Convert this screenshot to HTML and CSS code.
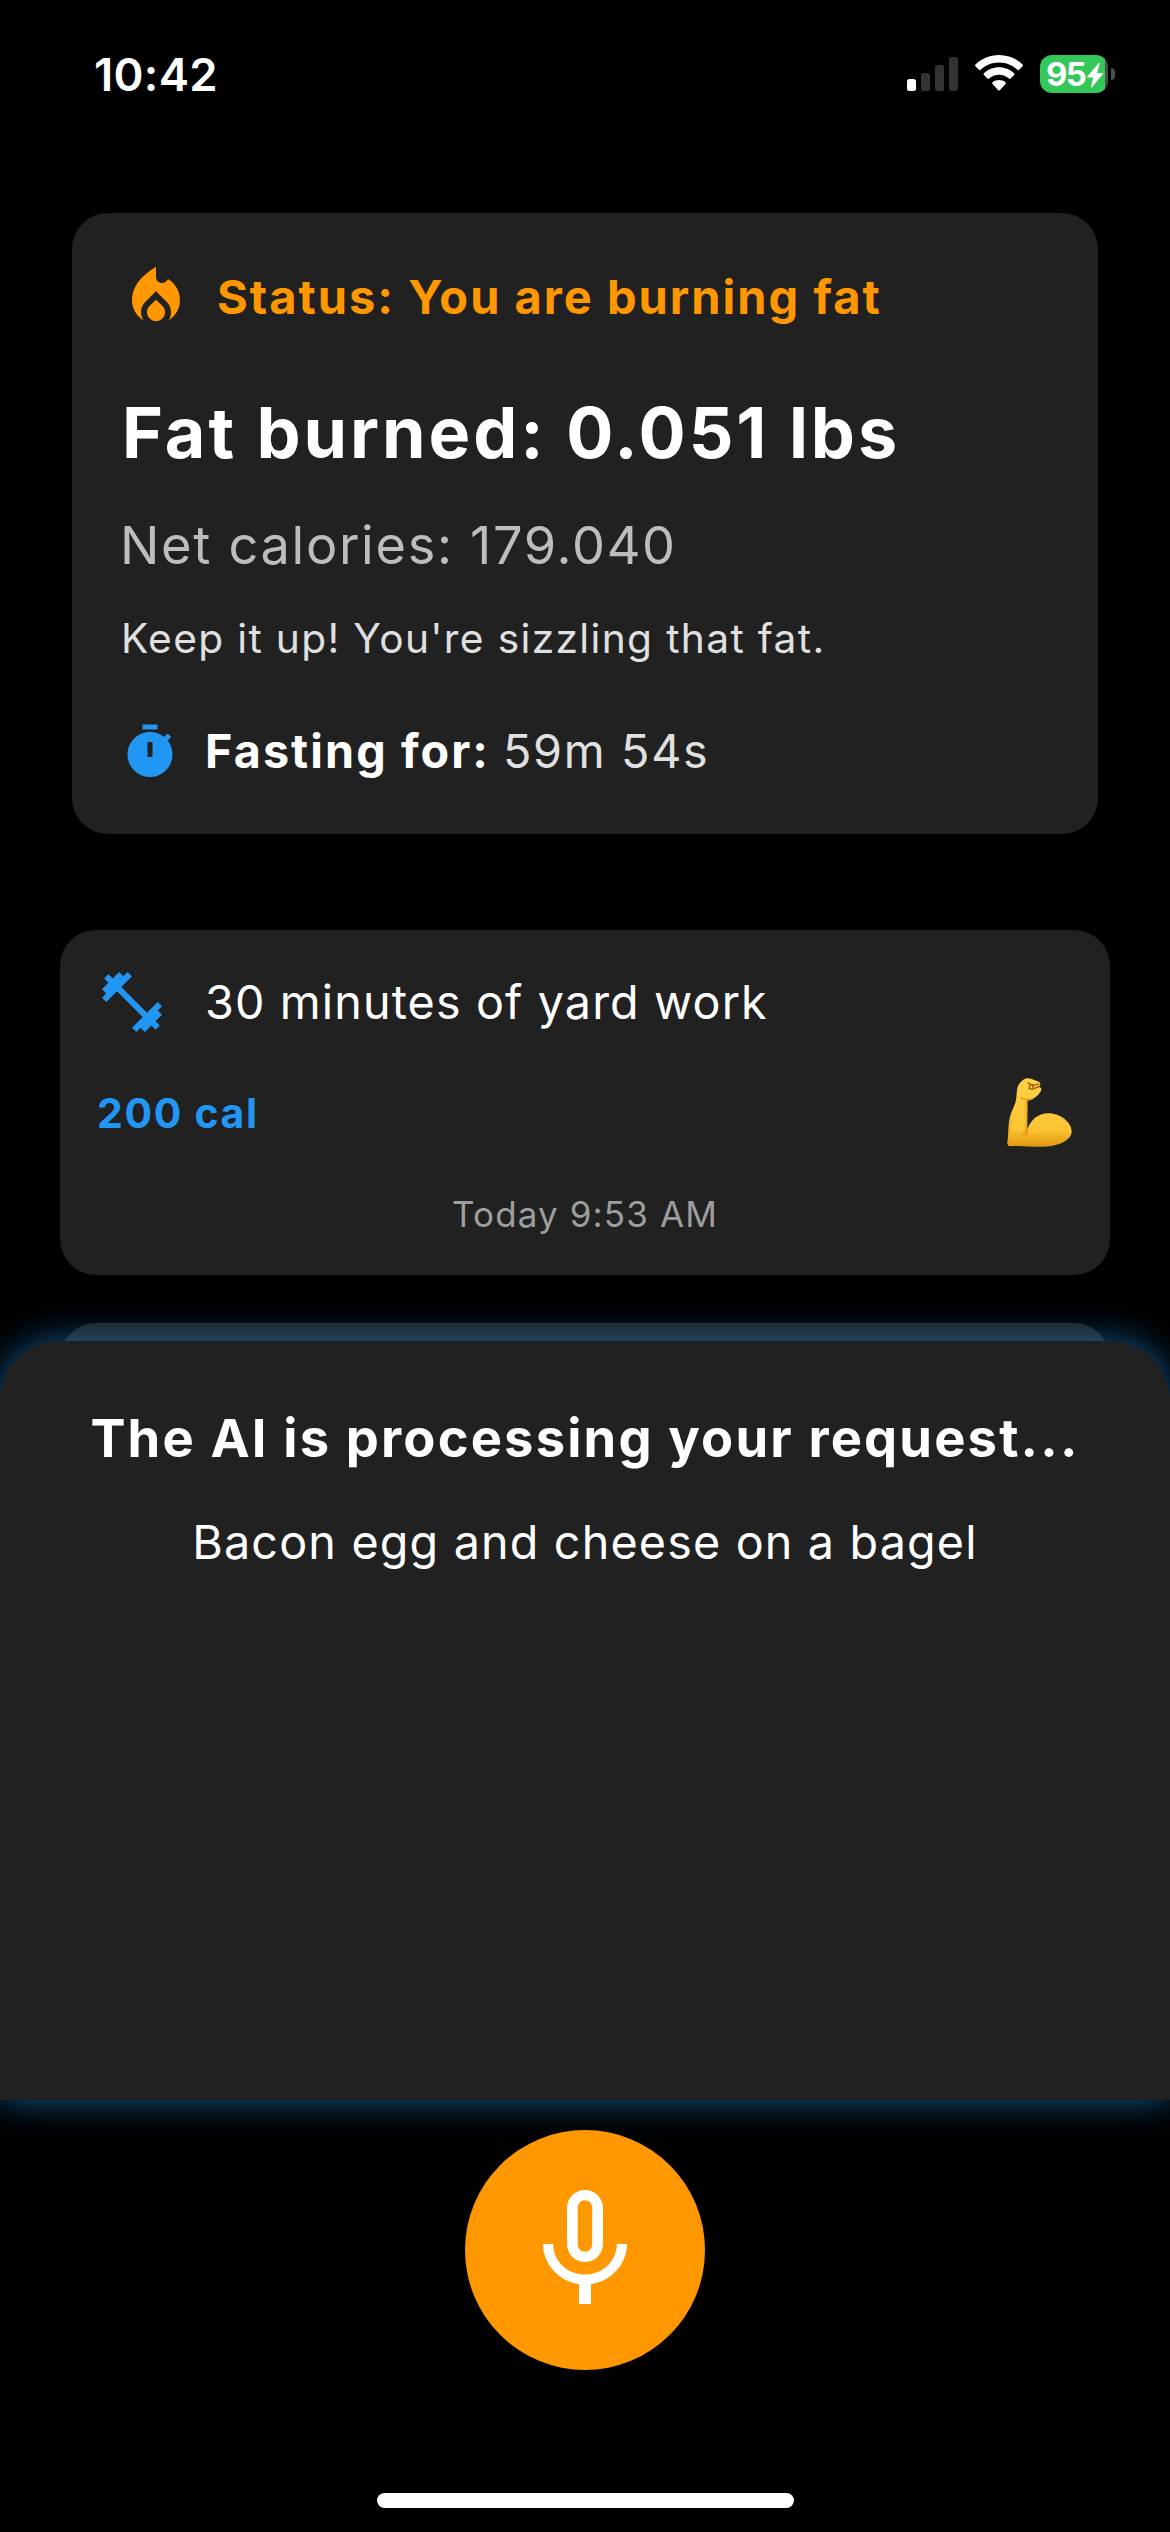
FILE: index.html
```html
<!DOCTYPE html>
<html lang="en">
<head>
<meta charset="utf-8">
<title>Fat Burn Tracker</title>
<link rel="stylesheet" href="styles.css">
</head>
<body>
<div class="app">
  <header class="status-bar">
    <span class="clock">10:42</span>
    <div class="indicators">
      <svg class="signal" viewBox="0 0 51 34" aria-label="Signal">
        <rect x="0" y="22" width="9" height="12" rx="2.5" fill="#fff"/>
        <rect x="14" y="16" width="9" height="18" rx="2.5" fill="#333"/>
        <rect x="28" y="8" width="9" height="26" rx="2.5" fill="#333"/>
        <rect x="42" y="0" width="9" height="34" rx="2.5" fill="#333"/>
      </svg>
      <svg class="wifi" viewBox="0 0 48 36" aria-label="Wi-Fi">
        <path fill="#fff" d="M24 0C14.8 0 6.500 3.600.4 9.500c-.5.500-.5 1.200 0 1.700l3.500 3.600c.4.500 1.100.5 1.600 0C10.400 10.100 16.900 7.400 24 7.400s13.600 2.700 18.500 7.400c.5.500 1.200.5 1.600 0l3.500-3.600c.5-.5.5-1.200 0-1.700C41.500 3.600 33.200 0 24 0z"/>
        <path fill="#fff" d="M24 12.300c-5.900 0-11.200 2.300-15.100 6-.5.500-.5 1.200 0 1.700l3.600 3.600c.4.400 1.100.4 1.600 0 2.600-2.400 6-3.900 9.900-3.900s7.300 1.500 9.900 3.900c.5.400 1.200.4 1.600 0l3.600-3.600c.5-.5.5-1.200 0-1.700-3.900-3.700-9.200-6-15.100-6z"/>
        <path fill="#fff" d="M24 25c-2.500 0-4.700.8-6.400 2.300-.5.400-.5 1.200 0 1.700l5.600 6.200c.5.500 1.100.5 1.600 0l5.600-6.200c.5-.5.5-1.300 0-1.700C28.700 25.800 26.500 25 24 25z"/>
      </svg>
      <div class="battery">
        <div class="battery-body">
          <span class="battery-level">95</span>
          <svg class="bolt" viewBox="0 0 16 25"><path fill="#fff" d="M11.600.2 0.500 13.200c-.6.7-.2 1.300.6 1.300h5.100L4 23.600c-.2.900.5 1.200 1.100.5L15.700 11.300c.6-.7.2-1.300-.6-1.300H10L12.600.9c.3-.8-.4-1.300-1-.7z"/></svg>
        </div>
        <span class="battery-cap"></span>
      </div>
    </div>
  </header>

  <main class="feed">
    <section class="card summary">
      <div class="status-row">
        <svg class="flame" viewBox="0 0 24 24"><path d="M12 12.900l-2.130 2.090c-.56.560-.87 1.290-.87 2.070C9 18.680 10.350 20 12 20s3-1.320 3-2.940c0-.78-.31-1.520-.87-2.070z"/><path d="M16 6l-.44.550C14.380 8.020 12 7.190 12 5.300V2S4 6 4 13c0 2.920 1.560 5.470 3.890 6.860-.56-.79-.89-1.760-.89-2.800 0-1.320.52-2.560 1.470-3.500L12 10.100l3.530 3.470c.95.930 1.470 2.170 1.470 3.500 0 1.020-.31 1.960-.85 2.750 1.890-1.150 3.290-3.060 3.710-5.300.66-3.550-1.070-6.900-3.860-8.520z"/></svg>
        <span class="status-text">Status: You are burning fat</span>
      </div>
      <h1 class="burned">Fat burned: 0.051 lbs</h1>
      <p class="net">Net calories: 179.040</p>
      <p class="cheer">Keep it up! You're sizzling that fat.</p>
      <div class="fasting-row">
        <svg class="timer" viewBox="0 0 24 24"><path fill-rule="evenodd" d="M9 1h6v2H9zM19.030 7.390l1.420-1.420c-.43-.51-.9-.99-1.410-1.410l-1.420 1.420C16.070 4.740 14.120 4 12 4c-4.970 0-9 4.030-9 9s4.020 9 9 9 9-4.030 9-9c0-2.120-.74-4.070-1.970-5.610zM13 14h-2V8h2z"/></svg>
        <span class="fasting-label">Fasting for:</span>
        <span class="fasting-time">59m 54s</span>
      </div>
    </section>

    <section class="card entry">
      <div class="entry-head">
        <svg class="dumbbell" viewBox="0 0 24 24"><path d="M20.570 14.860L22 13.430 20.570 12 17 15.570 8.430 7 12 3.430 10.570 2 9.140 3.430 7.710 2 5.570 4.140 4.140 2.710 2.710 4.140l1.430 1.430L2 7.710l1.430 1.430L2 10.570 3.430 12 7 8.430 15.570 17 12 20.570 13.430 22l1.430-1.430L16.290 22l2.140-2.140 1.430 1.430 1.430-1.430-1.430-1.430L22 16.290z"/></svg>
        <span class="entry-title">30 minutes of yard work</span>
      </div>
      <div class="entry-body">
        <span class="entry-cal">200 cal</span>
        <svg class="entry-arm" viewBox="0 0 201 213" role="img" aria-label="Flexed biceps">
          <defs>
            <linearGradient id="arm-fill" x1="0" y1="0" x2="0" y2="1">
              <stop offset="0" stop-color="#fdd247"/>
              <stop offset=".75" stop-color="#fcc433"/>
              <stop offset="1" stop-color="#e0950f"/>
            </linearGradient>
            <linearGradient id="forearm-shade" x1="0" y1="0" x2="1" y2="0">
              <stop offset="0" stop-color="#e59a17" stop-opacity=".8"/>
              <stop offset=".3" stop-color="#fcc838" stop-opacity="0"/>
              <stop offset=".75" stop-color="#fcc838" stop-opacity="0"/>
              <stop offset="1" stop-color="#d98b10" stop-opacity=".8"/>
            </linearGradient>
          </defs>
          <path fill="url(#arm-fill)" d="M57 3c4-2 10-1 16 1l22 8c6 2 8 6 6 11l-4 6c6 1 9 5 7 10-3 9-14 20-25 26-5 3-13 5-17 5 1 20-1 60 0 88 10-28 32-49 64-49 38 0 71 29 71 55 0 26-40 47-96 47-30 0-60-4-91-2-7 0-10-5-9-12 4-20 2-50 7-72 5-24 17-38 20-60 2-14 1-28 5-38 4-10 14-20 24-24z"/>
          <path fill="url(#forearm-shade)" d="M34 68c12 3 20 4 28 2 1 26-1 60 0 88-4 10-20 24-59 36 4-20 2-48 6-68 5-22 19-36 25-58z"/>
          <path fill="none" stroke="#dc930f" stroke-width="5" stroke-linecap="round" opacity=".75" d="M42 62c8 6 24 7 35 3M62 158c-3 7-8 12-16 16M62 158c0 8-1 14-5 20"/>
          <path fill="none" stroke="#9b5609" stroke-width="4" stroke-linecap="round" stroke-linejoin="round" d="M64 16l7 5-4 12 9 3 21-8M71 21l12 2 14-3M76 23l4 7"/>
        </svg>
      </div>
      <time class="entry-time">Today 9:53 AM</time>
    </section>

    <section class="card next-entry"></section>
  </main>

  <section class="sheet">
    <h2 class="sheet-title">The AI is processing your request...</h2>
    <p class="sheet-text">Bacon egg and cheese on a bagel</p>
  </section>

  <footer class="dock">
    <button class="mic-button" aria-label="Record">
      <svg class="mic" viewBox="0 0 24 24"><path d="M12 14c1.660 0 2.990-1.340 2.990-3L15 5c0-1.660-1.340-3-3-3S9 3.340 9 5v6c0 1.660 1.340 3 3 3zm-1.200-9.100c0-.66.540-1.200 1.200-1.200s1.200.540 1.200 1.200l-.01 6.200c0 .66-.53 1.200-1.190 1.200s-1.200-.54-1.200-1.200V4.900zm6.500 6.100c0 3-2.540 5.100-5.300 5.100S6.700 14 6.700 11H5c0 3.410 2.720 6.230 6 6.720V21h2v-3.280c3.280-.48 6-3.300 6-6.720h-1.700z"/></svg>
    </button>
    <span class="home-indicator"></span>
  </footer>
</div>
</body>
</html>
```
FILE: styles.css
```css
* {
  box-sizing: border-box;
}

body {
  margin: 0;
  background: #000;
  color: #fff;
  font-family: Inter, "Liberation Sans", sans-serif;
}

h1, h2, p {
  margin: 0;
}

svg {
  display: block;
  flex: none;
}

.app {
  display: flex;
  flex-direction: column;
  width: 1170px;
  height: 2532px;
  overflow: hidden;
  white-space: nowrap;
}

/* System status bar */
.status-bar {
  display: flex;
  justify-content: space-between;
  height: 213px;
  padding: 46px 55px 0 94px;
}

.clock {
  height: 56px;
  font-size: 45.5px;
  font-weight: 600;
  line-height: 57px;
  letter-spacing: 0.3px;
}

.indicators {
  display: flex;
  align-items: flex-start;
  padding-top: 9px;
}

.signal {
  width: 51px;
  height: 34px;
  margin: 2px 17px 0 0;
}

.wifi {
  width: 48px;
  height: 36px;
  margin-right: 17px;
}

.battery {
  display: flex;
  align-items: center;
  gap: 3px;
}

.battery-body {
  display: flex;
  align-items: center;
  width: 68px;
  height: 38px;
  padding-left: 6px;
  border-radius: 12px;
  background: linear-gradient(90deg, #34c759 65px, #4d4d4d 65px);
}

.battery-level {
  width: 41px;
  font-size: 33px;
  font-weight: 700;
  line-height: 38px;
  letter-spacing: -1.6px;
}

.bolt {
  width: 16px;
  height: 25px;
  margin-top: 2px;
}

.battery-cap {
  width: 4px;
  height: 12px;
  border-radius: 0 4px 4px 0;
  background: #4d4d4d;
}

/* Scrolling feed, cut off by the sheet */
.feed {
  display: flex;
  flex-direction: column;
  height: 1128px;
  padding: 0 60px;
  overflow: hidden;
}

.card {
  flex: none;
  border-radius: 36px;
  background: #212121;
}

.summary {
  height: 621px;
  margin: 0 12px 96px;
  padding: 48px;
}

.status-row {
  display: flex;
  align-items: center;
  gap: 25px;
  height: 72px;
  color: #ff9800;
}

.flame {
  width: 72px;
  height: 72px;
  fill: #ff9800;
}

.status-text {
  padding-bottom: 2px;
  font-size: 47px;
  font-weight: 700;
  letter-spacing: 2px;
}

.burned {
  margin-top: 58px;
  padding-left: 2px;
  font-size: 70px;
  font-weight: 700;
  line-height: 84px;
  letter-spacing: 2.94px;
}

.net {
  margin-top: 38px;
  color: #bdbdbd;
  font-size: 52.3px;
  line-height: 64px;
  letter-spacing: 1.68px;
}

.cheer {
  margin-top: 37px;
  padding-left: 1px;
  color: #e0e0e0;
  font-size: 40.7px;
  line-height: 50px;
  letter-spacing: 1.34px;
}

.fasting-row {
  display: flex;
  align-items: center;
  height: 60px;
  margin-top: 58px;
  font-size: 46.7px;
  line-height: 56px;
}

.timer {
  width: 60px;
  height: 60px;
  margin-right: 25px;
  fill: #2196f3;
}

.fasting-label,
.fasting-time {
  padding-bottom: 3px;
}

.fasting-label {
  margin-right: 13px;
  font-weight: 700;
  letter-spacing: 2.08px;
}

.fasting-time {
  color: #e0e0e0;
  letter-spacing: 1.68px;
}

.entry {
  display: flex;
  flex-direction: column;
  height: 345px;
  margin-bottom: 48px;
  padding: 36px;
}

.entry-head {
  display: flex;
  align-items: center;
  gap: 37px;
  height: 72px;
}

.dumbbell {
  width: 72px;
  height: 72px;
  fill: #2196f3;
}

.entry-title {
  font-size: 46.7px;
  letter-spacing: 1.12px;
}

.entry-body {
  display: flex;
  align-items: center;
  justify-content: space-between;
  height: 78px;
  margin-top: 36px;
  padding: 0 1px;
}

.entry-cal {
  color: #2196f3;
  font-size: 41px;
  font-weight: 700;
  letter-spacing: 1.64px;
}

.entry-arm {
  width: 66px;
  height: 71px;
  margin-bottom: 2px;
}

.entry-time {
  margin-top: 41px;
  color: #9e9e9e;
  font-size: 35px;
  line-height: 42px;
  letter-spacing: 1.13px;
  text-align: center;
}

.next-entry {
  height: 345px;
}

/* Processing sheet */
.sheet {
  position: relative;
  height: 759px;
  padding-top: 65px;
  border-radius: 60px 60px 0 0;
  background: #212121;
  box-shadow: 0 0 36px rgba(33, 150, 243, 0.6);
  text-align: center;
}

.sheet-title {
  font-size: 52.5px;
  font-weight: 700;
  line-height: 64px;
  letter-spacing: 2.15px;
}

.sheet-text {
  margin-top: 44px;
  font-size: 46.7px;
  line-height: 56px;
  letter-spacing: 1.16px;
}

/* Record button and home indicator */
.dock {
  position: relative;
  display: flex;
  flex: 1;
  flex-direction: column;
  align-items: center;
  justify-content: space-between;
  padding: 30px 0 24px;
}

.mic-button {
  display: flex;
  align-items: center;
  justify-content: center;
  width: 240px;
  height: 240px;
  padding: 0;
  border: 0;
  border-radius: 50%;
  background: #ff9800;
}

.mic {
  width: 144px;
  height: 144px;
  fill: #fff;
}

.home-indicator {
  width: 417px;
  height: 15px;
  border-radius: 8px;
  background: #fff;
}
```
